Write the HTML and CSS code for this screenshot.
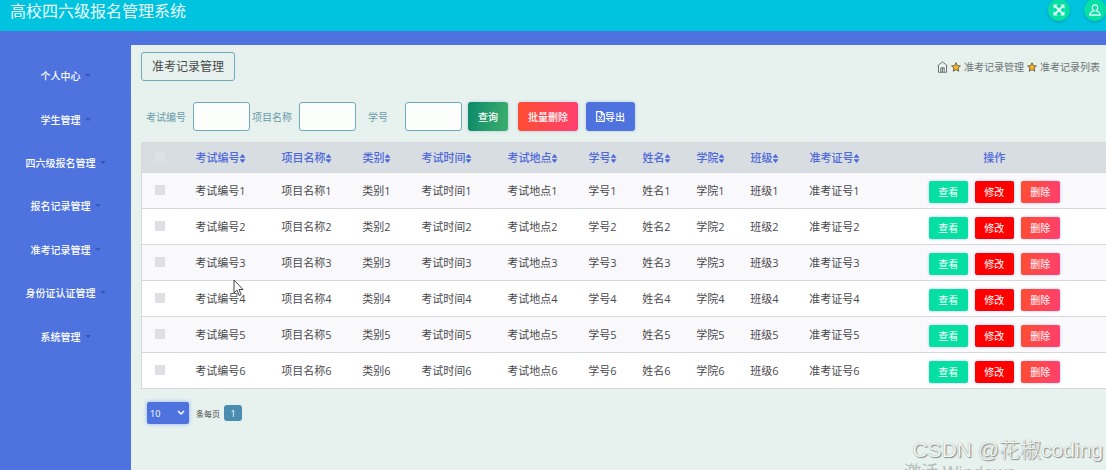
FILE: index.html
```html
<!DOCTYPE html>
<html lang="zh-CN">
<head>
<meta charset="utf-8">
<title>高校四六级报名管理系统</title>
<link rel="stylesheet" href="styles.css">
</head>
<body>
<header class="topbar">
  <h1 class="brand">高校四六级报名管理系统</h1>
  <div class="tools">
    <button class="round" type="button" aria-label="全屏">
      <svg width="12" height="12" viewBox="0 0 12 12" fill="#dffcf8" stroke="#dffcf8"><path d="M2.5 2.500 9.500 9.500M9.500 2.500 2.500 9.500" stroke-width="1.800"/><path stroke="none" d="M.5.5h4.200L.5 4.700zM11.500.5v4.200L7.300.5zM.5 11.500V7.300l4.200 4.200zM11.500 11.500H7.300l4.200-4.200z"/></svg>
    </button>
    <button class="round" type="button" aria-label="用户">
      <svg width="12" height="12" viewBox="0 0 12 12" fill="none" stroke="#dffcf8" stroke-width="1.300"><path d="M6 .8c-1.700 0-2.700 1.200-2.700 2.900 0 1.300.6 2.500 1.400 3.100C2.600 7.300 1 8.700.8 11h10.400C11 8.700 9.400 7.300 7.300 6.800c.8-.6 1.400-1.800 1.400-3.100C8.700 2 7.700.8 6 .8z"/></svg>
    </button>
  </div>
</header>
<div class="layout">
  <nav class="sidebar">
    <ul class="menu">
      <li><a href="#">个人中心</a></li>
      <li><a href="#">学生管理</a></li>
      <li><a href="#">四六级报名管理</a></li>
      <li><a href="#">报名记录管理</a></li>
      <li><a href="#">准考记录管理</a></li>
      <li><a href="#">身份证认证管理</a></li>
      <li><a href="#">系统管理</a></li>
    </ul>
  </nav>
  <main class="content">
    <div class="heading">
      <h2 class="title">准考记录管理</h2>
      <div class="crumbs">
        <a href="#" aria-label="首页"><svg width="11" height="12" viewBox="0 0 11 12" fill="none" stroke="#6d7477"><path d="M.5 5 5.500.8l5 4.200M1.500 4.500v6.800h8V4.500M3.800 11V6.800h3.400V11M5.500 7v4"/></svg></a>
        <svg class="star" width="10" height="10" viewBox="0 0 10 10"><path d="M5 .7 6.300 3.600l3.100.3-2.300 2.100.7 3.200L5 7.600 2.200 9.200l.7-3.200L.6 3.900l3.100-.3z" fill="#f3b531" stroke="#6b5a35" stroke-width=".9"/></svg>
        <span>准考记录管理</span>
        <svg class="star" width="10" height="10" viewBox="0 0 10 10"><path d="M5 .7 6.300 3.600l3.100.3-2.300 2.100.7 3.200L5 7.600 2.200 9.200l.7-3.200L.6 3.900l3.100-.3z" fill="#f3b531" stroke="#6b5a35" stroke-width=".9"/></svg>
        <span>准考记录列表</span>
      </div>
    </div>
    <form class="search">
      <label for="exam">考试编号</label><input id="exam" type="text">
      <label for="project">项目名称</label><input id="project" type="text">
      <label for="student">学号</label><input id="student" type="text">
      <button class="btn query" type="button">查询</button>
      <button class="btn danger" type="button">批量删除</button>
      <button class="btn export" type="button"><svg width="9" height="11" viewBox="0 0 9 11" fill="none" stroke="#fff" stroke-width="1.200"><path d="M.7.7h4.800l2.800 2.800v6.800H.7zM5.300.7v3h3M2.800 5l3.200 4M6 5 2.800 9"/></svg>导出</button>
    </form>
    <table class="records">
      <colgroup><col class="c-check"><col class="c-wide"><col class="c-wide"><col class="c-slim"><col class="c-wide"><col class="c-wide"><col class="c-slim"><col class="c-slim"><col class="c-slim"><col class="c-slim"><col class="c-wide"><col></colgroup>
      <thead>
        <tr><th><input type="checkbox" aria-label="全选"></th><th class="sort">考试编号</th><th class="sort">项目名称</th><th class="sort">类别</th><th class="sort">考试时间</th><th class="sort">考试地点</th><th class="sort">学号</th><th class="sort">姓名</th><th class="sort">学院</th><th class="sort">班级</th><th class="sort">准考证号</th><th class="ops">操作</th></tr>
      </thead>
      <tbody>
        <tr><td><input type="checkbox" aria-label="选择 1"></td><td>考试编号1</td><td>项目名称1</td><td>类别1</td><td>考试时间1</td><td>考试地点1</td><td>学号1</td><td>姓名1</td><td>学院1</td><td>班级1</td><td>准考证号1</td><td class="ops"><div class="actions"><button class="act view" type="button">查看</button><button class="act edit" type="button">修改</button><button class="act danger" type="button">删除</button></div></td></tr>
        <tr><td><input type="checkbox" aria-label="选择 2"></td><td>考试编号2</td><td>项目名称2</td><td>类别2</td><td>考试时间2</td><td>考试地点2</td><td>学号2</td><td>姓名2</td><td>学院2</td><td>班级2</td><td>准考证号2</td><td class="ops"><div class="actions"><button class="act view" type="button">查看</button><button class="act edit" type="button">修改</button><button class="act danger" type="button">删除</button></div></td></tr>
        <tr><td><input type="checkbox" aria-label="选择 3"></td><td>考试编号3</td><td>项目名称3</td><td>类别3</td><td>考试时间3</td><td>考试地点3</td><td>学号3</td><td>姓名3</td><td>学院3</td><td>班级3</td><td>准考证号3</td><td class="ops"><div class="actions"><button class="act view" type="button">查看</button><button class="act edit" type="button">修改</button><button class="act danger" type="button">删除</button></div></td></tr>
        <tr><td><input type="checkbox" aria-label="选择 4"></td><td>考试编号4</td><td>项目名称4</td><td>类别4</td><td>考试时间4</td><td>考试地点4</td><td>学号4</td><td>姓名4</td><td>学院4</td><td>班级4</td><td>准考证号4</td><td class="ops"><div class="actions"><button class="act view" type="button">查看</button><button class="act edit" type="button">修改</button><button class="act danger" type="button">删除</button></div></td></tr>
        <tr><td><input type="checkbox" aria-label="选择 5"></td><td>考试编号5</td><td>项目名称5</td><td>类别5</td><td>考试时间5</td><td>考试地点5</td><td>学号5</td><td>姓名5</td><td>学院5</td><td>班级5</td><td>准考证号5</td><td class="ops"><div class="actions"><button class="act view" type="button">查看</button><button class="act edit" type="button">修改</button><button class="act danger" type="button">删除</button></div></td></tr>
        <tr><td><input type="checkbox" aria-label="选择 6"></td><td>考试编号6</td><td>项目名称6</td><td>类别6</td><td>考试时间6</td><td>考试地点6</td><td>学号6</td><td>姓名6</td><td>学院6</td><td>班级6</td><td>准考证号6</td><td class="ops"><div class="actions"><button class="act view" type="button">查看</button><button class="act edit" type="button">修改</button><button class="act danger" type="button">删除</button></div></td></tr>
      </tbody>
    </table>
    <div class="pager">
      <select id="size"><option>10</option><option>20</option></select>
      <label for="size">条每页</label>
      <button class="page" type="button">1</button>
    </div>
  </main>
</div>
<svg class="cursor" width="11" height="18" viewBox="0 0 11 18"><path d="M1 1v13l3-2.800 2.200 5.300 2-.9L6 10.500h4z" fill="#fff" stroke="#444" stroke-width="1"/></svg>
<div class="activate">激活 Windows</div>
<div class="watermark">CSDN @花椒coding</div>
</body>
</html>
```
FILE: styles.css
```css
* { box-sizing: border-box; }

body {
  margin: 0;
  min-height: 100vh;
  display: flex;
  flex-direction: column;
  position: relative;
  overflow: hidden;
  background: #4e73df;
  font-family: "Open Sans", "Noto Sans CJK SC", sans-serif;
  font-size: 11px;
  color: #4a4a4e;
}

h1, h2, ul { margin: 0; padding: 0; font-weight: 400; }
a { color: inherit; text-decoration: none; }
button, input, select { font-family: inherit; margin: 0; }

.topbar {
  display: flex;
  justify-content: space-between;
  height: 31px;
  padding-left: 10px;
  background: #00c4df;
  color: #e8fbfd;
}
.brand { font-size: 16px; line-height: 22px; }
.tools { display: flex; gap: 14px; }
.round {
  display: flex;
  align-items: center;
  justify-content: center;
  width: 22px;
  height: 22px;
  margin-top: -1px;
  padding: 0;
  border: 0;
  border-radius: 50%;
  background: #07dfa5;
  box-shadow: 0 1px 3px #0898b8;
}

.layout { display: flex; flex: 1; padding-top: 14px; }
.sidebar { width: 131px; flex: none; padding-top: 9px; }
.menu {
  display: grid;
  grid-auto-rows: 1fr;
  min-height: 304px;
  list-style: none;
}
.menu a {
  display: flex;
  align-items: center;
  justify-content: center;
  gap: 4px;
  height: 100%;
  color: #fff;
  font-size: 10px;
  font-weight: 500;
}
.menu a::after {
  content: "";
  border: 3px solid transparent;
  border-top-color: #3656b4;
  border-bottom: 0;
}

.content {
  flex: 1;
  min-width: 0;
  padding: 7px 0 0 10px;
  background: #e7f1ed;
}
.heading {
  display: flex;
  justify-content: space-between;
  align-items: center;
  padding-right: 6px;
}
.title {
  padding: 0 10px;
  border: 1px solid #6faabd;
  border-radius: 3px;
  font-size: 12px;
  line-height: 27px;
}
.crumbs {
  display: flex;
  align-items: center;
  gap: 3px;
  font-size: 10px;
  color: #6d7477;
}
.crumbs svg { display: block; }

.search {
  display: flex;
  align-items: center;
  padding: 21px 0 11px 5px;
  font-size: 10px;
  color: #6a9bab;
}
.search label { width: 40px; margin-right: 7px; text-align: center; }
.search input {
  width: 57px;
  height: 29px;
  margin-right: 2px;
  border: 1px solid #6faabd;
  border-radius: 3px;
  background: #fcfefc;
}
.btn {
  display: flex;
  align-items: center;
  height: 29px;
  padding: 0 10px;
  border: 0;
  border-radius: 3px;
  color: #fff;
  font-size: 10px;
  font-weight: 500;
  box-shadow: 0 0 3px #a9c6ee;
}
.query { margin: 0 10px 0 4px; background: linear-gradient(100deg, #0b8a68, #3fae6e); }
.danger { background: linear-gradient(100deg, #ff4d31, #ff4070); }
.export { margin-left: 8px; background: #4e73df; }

.records {
  width: 100%;
  table-layout: fixed;
  border-collapse: collapse;
  border-left: 1px solid #d3d8da;
  text-align: center;
}
.c-check { width: 36px; }
.c-wide { width: 86px; }
.c-slim { width: 54px; }
.records th, .records td {
  height: 36px;
  padding: 0 0 1px;
  border-top: 1px solid #d6d7dc;
  border-bottom: 1px solid #d6d7dc;
}
.records th {
  height: 30px;
  background: #d7dde1;
  color: #4e68dc;
  font-weight: 500;
}
.records tbody tr { background: #fff; }
.records tbody tr:nth-child(odd) { background: #f9f9fb; }
.sort::after {
  content: "";
  display: inline-block;
  width: 6px;
  height: 9px;
  vertical-align: -1px;
  background: #4e68dc;
  clip-path: polygon(50% 0, 100% 42%, 0 42%, 0 58%, 100% 58%, 50% 100%, 0 58%, 0 42%);
}
.records input {
  appearance: none;
  display: block;
  width: 10px;
  height: 10px;
  margin: 0 auto;
  background: #e0e0e4;
}
.records th input { background: #dce1e4; }
.records .ops { padding-left: 5px; }
.actions { display: flex; justify-content: center; gap: 7px; padding-top: 3px; }
.act {
  width: 39px;
  height: 22px;
  padding: 0;
  border: 0;
  border-radius: 2px;
  color: #fff;
  font-size: 10px;
  box-shadow: 0 0 3px #b5c4f4;
}
.view { background: #05dfa2; }
.edit { background: #f00; }

.pager {
  display: flex;
  align-items: center;
  padding: 13px 0 0 6px;
  font-size: 8px;
}
.pager select {
  appearance: none;
  width: 42px;
  height: 22px;
  padding: 0 3px;
  border: 0;
  border-radius: 2px;
  color: #fff;
  font-size: 9px;
  background: #4e73df url("data:image/svg+xml,%3Csvg xmlns='http://www.w3.org/2000/svg' width='8' height='6'%3E%3Cpath d='M1 1l3 3 3-3' fill='none' stroke='white' stroke-width='1.500'/%3E%3C/svg%3E") no-repeat right 4px center;
  box-shadow: 0 0 4px #8fb4f5;
}
.pager label { margin: 0 4px 0 7px; }
.page {
  width: 18px;
  height: 16px;
  padding: 0;
  border: 0;
  border-radius: 3px;
  background: #4b8db0;
  color: #fff;
  font-size: 9px;
}

.cursor { position: absolute; left: 233px; top: 279px; }
.watermark, .activate { position: absolute; white-space: nowrap; }
.watermark {
  right: 3px;
  bottom: 4px;
  font-family: "Liberation Sans", "Noto Sans CJK SC", sans-serif;
  font-size: 21px;
  font-weight: 300;
  line-height: 32px;
  color: #f1f5f3;
  text-shadow: 1px 1px 1px #858b89, 0 0 1px #9ba19f;
}
.activate {
  right: 91px;
  bottom: -14px;
  font-size: 17px;
  line-height: 24px;
  color: #b4bcba;
}
```
